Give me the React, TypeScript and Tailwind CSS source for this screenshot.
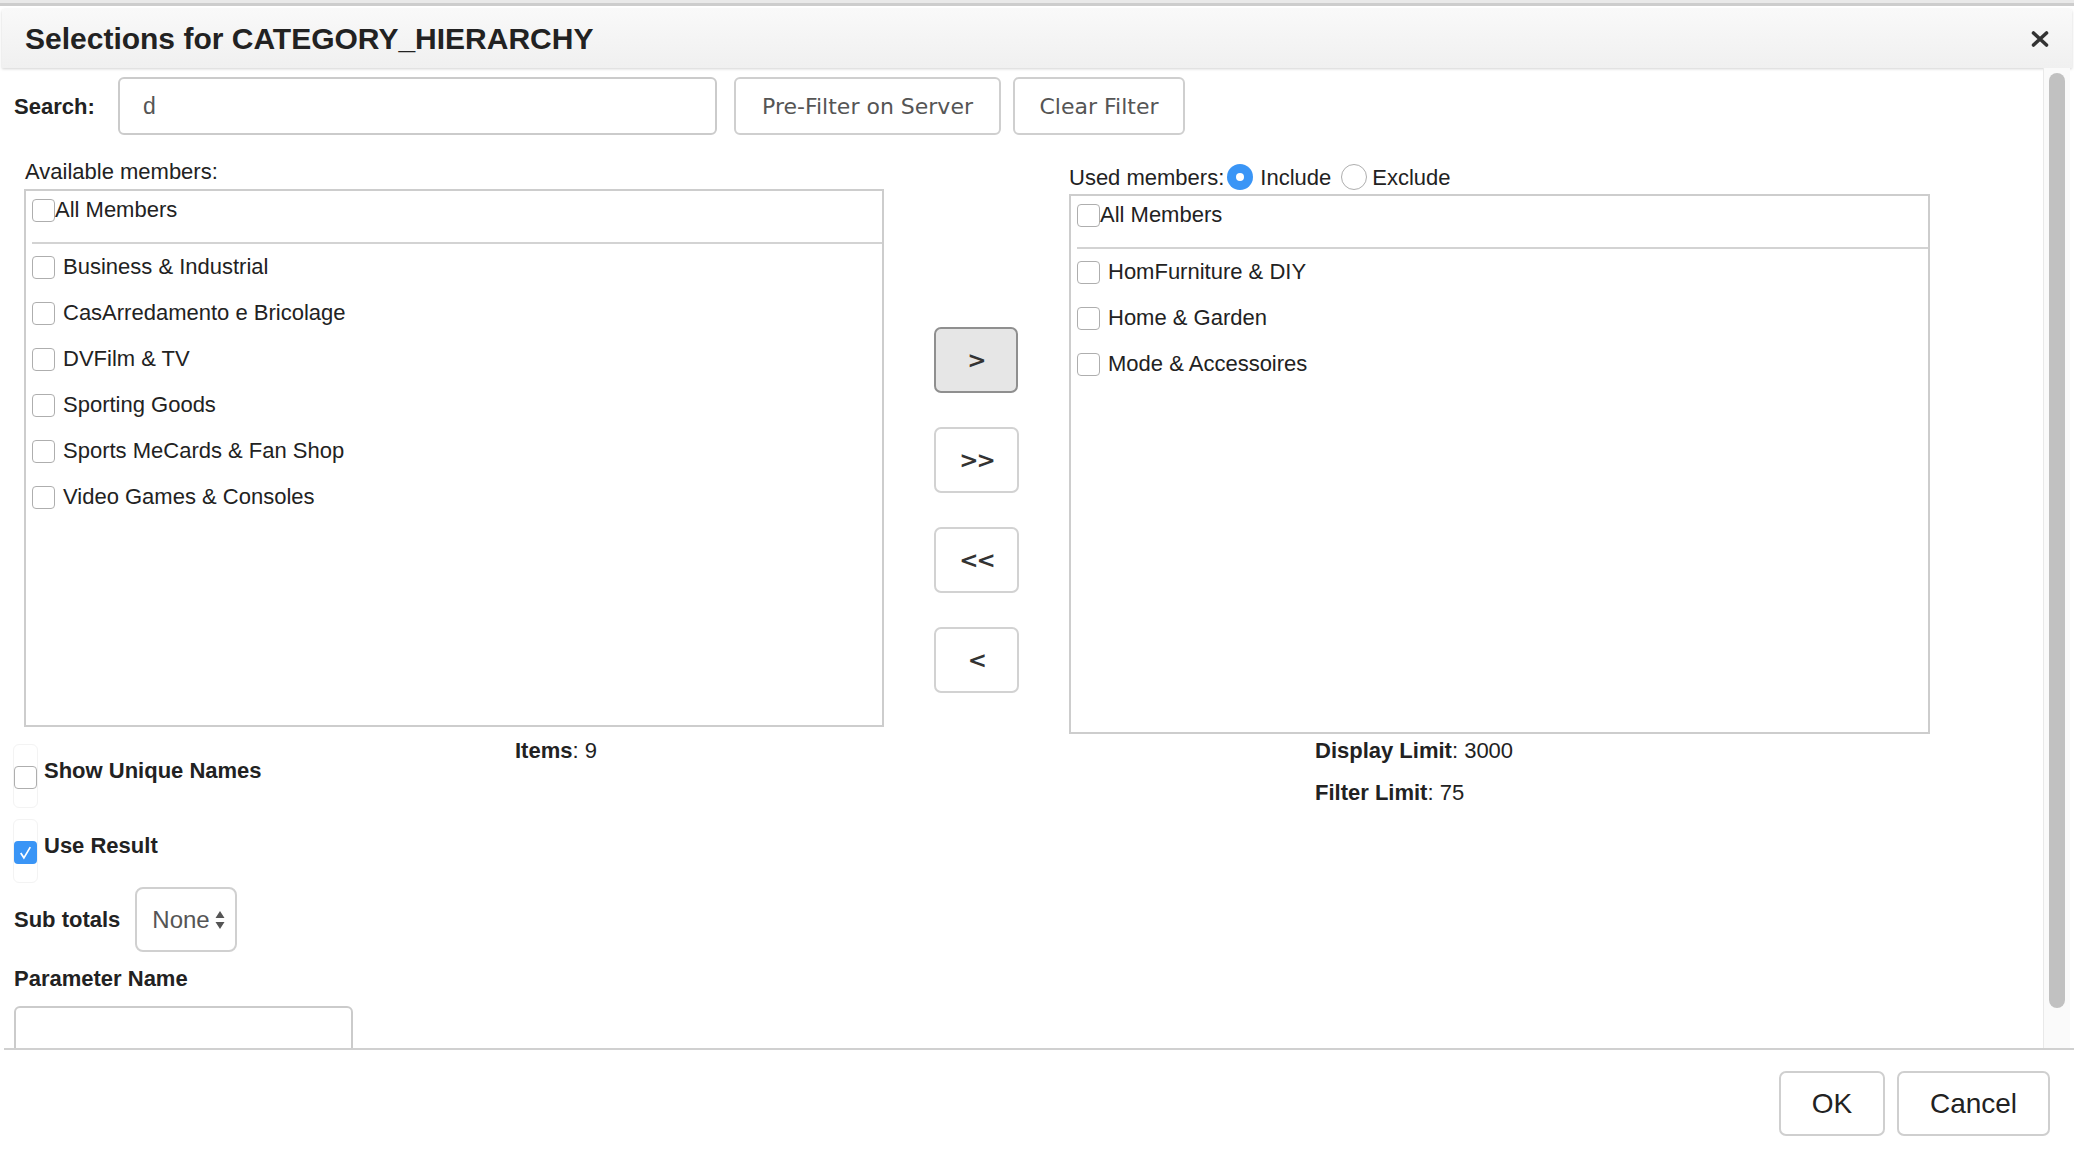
import React from "react";

const available = [
  "Business & Industrial",
  "CasArredamento e Bricolage",
  "DVFilm & TV",
  "Sporting Goods",
  "Sports MeCards & Fan Shop",
  "Video Games & Consoles",
];

const used = ["HomFurniture & DIY", "Home & Garden", "Mode & Accessoires"];

function Box({ checked }: { checked?: boolean }) {
  if (checked) {
    return (
      <span className="flex h-[23px] w-[23px] shrink-0 items-center justify-center rounded-[4px] bg-[#3a95f6]">
        <svg viewBox="0 0 16 16" className="h-[17px] w-[17px]">
          <path d="M3.5 8.5 L6.5 13 L12.5 3" fill="none" stroke="#ffffff" strokeWidth="1.6" />
        </svg>
      </span>
    );
  }
  return <span className="block h-[23px] w-[23px] shrink-0 rounded-[4px] border border-[#aeaeae] bg-white" />;
}

function Radio({ on }: { on?: boolean }) {
  if (on) {
    return (
      <span className="flex h-[26px] w-[26px] shrink-0 items-center justify-center rounded-full bg-[#3a95f6]">
        <span className="h-[8px] w-[8px] rounded-full bg-white" />
      </span>
    );
  }
  return <span className="block h-[26px] w-[26px] shrink-0 rounded-full border border-[#aeaeae] bg-white" />;
}

function MemberList({ items, height }: { items: string[]; height: string }) {
  return (
    <div className={`${height} border-2 border-[#cdcdcd] bg-white`}>
      <div className="flex items-center pl-[6px] pt-[7px] pb-[20px]">
        <Box />
        <span className="leading-[24px]">All Members</span>
      </div>
      <div className="ml-[6px] h-[2px] bg-[#d3d3d3]" />
      {items.map((item) => (
        <div key={item} className="flex h-[46px] items-center gap-[8px] pl-[6px]">
          <Box />
          <span className="leading-[24px]">{item}</span>
        </div>
      ))}
    </div>
  );
}

function MoveButton({ label, active }: { label: string; active?: boolean }) {
  return (
    <button
      className={
        active
          ? "flex h-[66px] w-[84px] items-center justify-center rounded-[7px] border-2 border-[#8f8f8f] bg-[#e6e6e6] font-['DejaVu_Sans',Verdana,sans-serif] text-[23px] font-semibold tracking-[-2px] text-[#333]"
          : "flex h-[66px] w-[85px] items-center justify-center rounded-[7px] border-2 border-[#d2d2d2] bg-white font-['DejaVu_Sans',Verdana,sans-serif] text-[23px] font-semibold tracking-[-2px] text-[#333]"
      }
    >
      {label}
    </button>
  );
}

function Option({ label, checked }: { label: string; checked?: boolean }) {
  return (
    <div className="flex items-start">
      <div className="flex h-[64px] w-[25px] justify-center rounded-[6px] border border-[#f3f3f3] pt-[21px]">
        <Box checked={checked} />
      </div>
      <span className="ml-[6px] mt-[15px] font-bold leading-[24px]">{label}</span>
    </div>
  );
}

export default function App() {
  return (
    <div className="flex h-[1164px] w-[2074px] flex-col overflow-hidden bg-white font-['Liberation_Sans',Arial,sans-serif] text-[22px] text-[#222]">
      <div className="h-[6px] shrink-0 border-b-[3px] border-[#cdcdcd] bg-[#e9e9e9]" />
      {/* header */}
      <div className="mx-[2px] mt-[3px] flex h-[59px] shrink-0 items-center justify-between rounded-t-[3px] bg-gradient-to-b from-[#f9f9f9] to-[#f0f0f0] pl-[23px] pr-[23px] shadow-[0_1px_3px_rgba(0,0,0,0.18)]">
        <h1 className="text-[30px] font-bold leading-[36px] text-[#222]">Selections for CATEGORY_HIERARCHY</h1>
        <svg viewBox="0 0 18 16" className="h-[16px] w-[18px]">
          <path d="M2.5 2 L15.5 14 M15.5 2 L2.5 14" stroke="#333" strokeWidth="3.6" strokeLinecap="round" />
        </svg>
      </div>

      {/* body */}
      <div className="flex min-h-0 flex-1">
        <div className="min-w-0 flex-1 overflow-hidden">
          <div className="flex items-center pl-[14px] pt-[9px]">
            <span className="w-[104px] font-bold">Search:</span>
            <div className="flex h-[58px] w-[599px] items-center rounded-[6px] border-2 border-[#cbcbcb] pl-[23px] text-[23px] text-[#555]">
              d
            </div>
            <button className="ml-[17px] h-[58px] w-[267px] rounded-[6px] border-2 border-[#cfcfcf] bg-white text-center font-['DejaVu_Sans',Verdana,sans-serif] text-[22px] text-[#555]">
              Pre-Filter on Server
            </button>
            <button className="ml-[12px] h-[58px] w-[172px] rounded-[6px] border-2 border-[#cfcfcf] bg-white text-center font-['DejaVu_Sans',Verdana,sans-serif] text-[22px] text-[#555]">
              Clear Filter
            </button>
          </div>

          <div className="mt-[24px] flex items-start pl-[24px]">
            <div className="w-[860px]">
              <div className="mb-[4px] pl-[1px] leading-[26px]">Available members:</div>
              <MemberList items={available} height="h-[538px]" />
            </div>
            <div className="ml-[50px] mt-[168px] flex flex-col gap-[34px]">
              <MoveButton label=">" active />
              <MoveButton label=">>" />
              <MoveButton label="<<" />
              <MoveButton label="<" />
            </div>
            <div className="ml-[50px] w-[861px] pt-[5px]">
              <div className="mb-[4px] flex h-[26px] items-center">
                <span>Used members:</span>
                <span className="ml-[3px]">
                  <Radio on />
                </span>
                <span className="ml-[7px]">Include</span>
                <span className="ml-[10px]">
                  <Radio />
                </span>
                <span className="ml-[5px]">Exclude</span>
              </div>
              <MemberList items={used} height="h-[540px]" />
            </div>
          </div>

          <div className="flex items-start">
            <div className="w-[515px] pl-[13px]">
              <div className="mt-[10px]">
                <Option label="Show Unique Names" />
              </div>
              <div className="mt-[11px]">
                <Option label="Use Result" checked />
              </div>
              <div className="mt-[4px] flex items-center pl-[1px]">
                <span className="font-bold">Sub totals</span>
                <div className="ml-[15px] flex h-[65px] w-[102px] items-center rounded-[8px] border-2 border-[#d0d0d0] pl-[15px] text-[24px] text-[#555]">
                  <span>None</span>
                  <svg viewBox="0 0 10 22" className="ml-[5px] h-[22px] w-[10px]">
                    <path d="M5 2 L9.5 9 L0.5 9 Z M5 20 L9.5 13 L0.5 13 Z" fill="#555" />
                  </svg>
                </div>
              </div>
              <div className="mt-[15px] pl-[1px] font-bold leading-[24px]">Parameter Name</div>
              <div className="ml-[1px] mt-[15px] h-[57px] w-[339px] rounded-[6px] border-2 border-[#cbcbcb]" />
            </div>
            <div className="w-[800px] pt-[5px] leading-[24px]">
              <span className="font-bold">Items</span>: 9
            </div>
            <div className="pt-[5px] leading-[24px]">
              <div>
                <span className="font-bold">Display Limit</span>: 3000
              </div>
              <div className="mt-[18px]">
                <span className="font-bold">Filter Limit</span>: 75
              </div>
            </div>
          </div>
        </div>
        <div className="mr-[4px] flex w-[27px] shrink-0 justify-center border-l border-[#e9e9e9] bg-[#fafafa] pt-[5px]">
          <div className="h-[935px] w-[16px] rounded-full bg-[#c1c1c1]" />
        </div>
      </div>

      {/* footer */}
      <div className="ml-[4px] flex h-[116px] shrink-0 items-start justify-end gap-[12px] border-t-2 border-[#d0d0d0] pr-[24px] pt-[21px]">
        <button className="h-[65px] w-[106px] rounded-[7px] border-2 border-[#cfcfcf] bg-white text-[28px] text-[#222]">OK</button>
        <button className="h-[65px] w-[153px] rounded-[7px] border-2 border-[#cfcfcf] bg-white text-[28px] text-[#222]">Cancel</button>
      </div>
    </div>
  );
}
